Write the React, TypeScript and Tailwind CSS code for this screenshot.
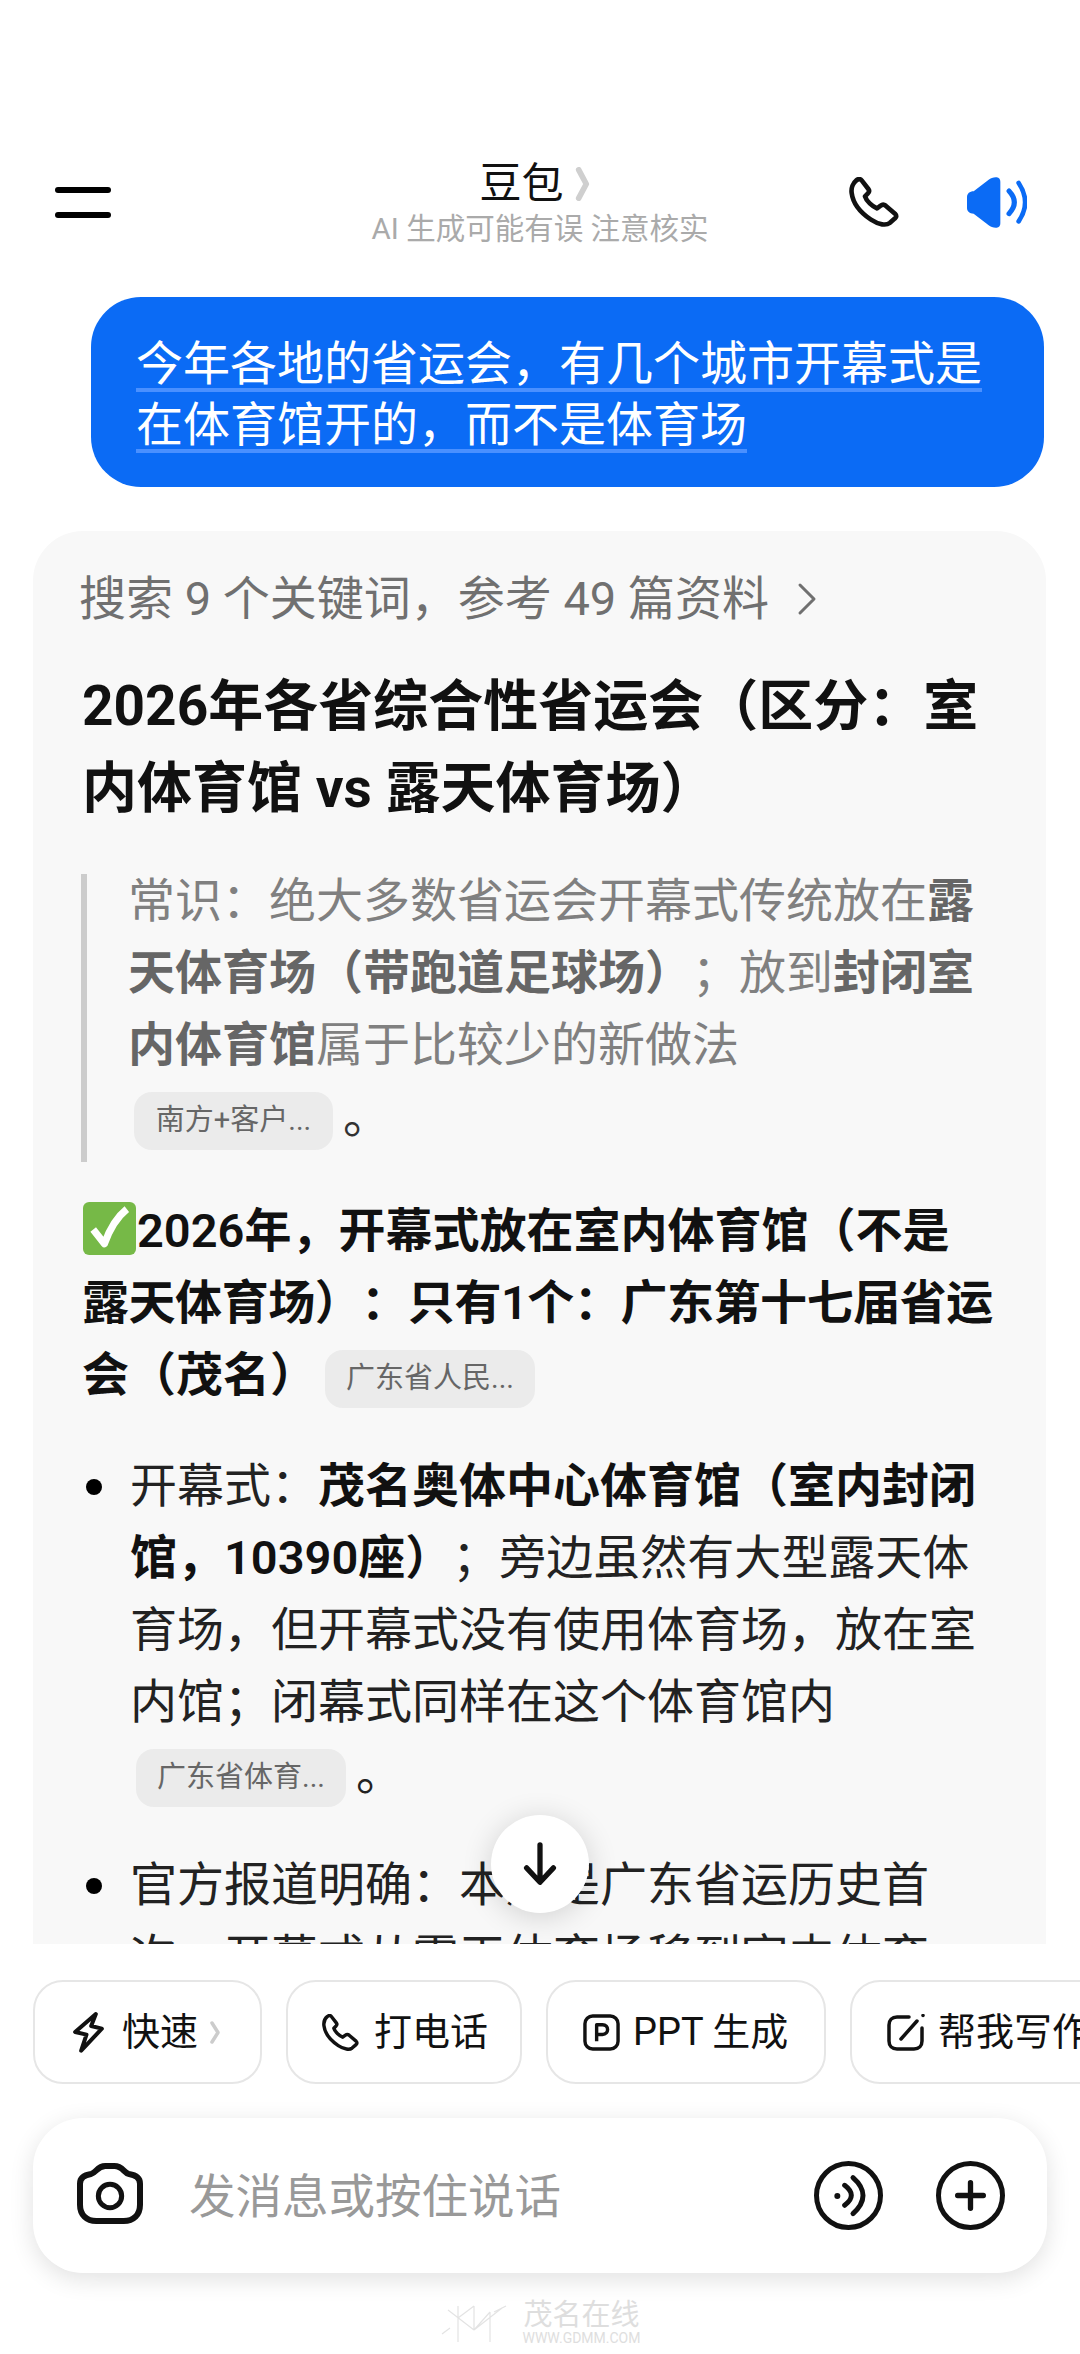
import { ReactNode } from "react";

const font = { fontFamily: '"Roboto", "Noto Sans CJK SC", sans-serif' };

const Pill = ({ label, className = "" }: { label: string; className?: string }) => (
  <span
    className={`inline-flex items-center justify-center h-[58px] rounded-[18px] bg-[#ebebeb] text-[29px] leading-none font-normal text-[#666666] align-middle ${className}`}
  >
    {label}
  </span>
);

const Chip = ({
  icon,
  label,
  className,
  extra,
}: {
  icon: ReactNode;
  label: string;
  className: string;
  extra?: ReactNode;
}) => (
  <div
    className={`flex flex-none items-center h-[104px] rounded-[30px] border-2 border-[#e6e6e6] bg-white text-[38px] text-[#111111] ${className}`}
  >
    {icon}
    <span className="whitespace-nowrap">{label}</span>
    {extra}
  </div>
);

const CheckEmoji = () => (
  <svg viewBox="0 0 52 52" className="inline-block w-[55px] h-[53px] align-[-8px]">
    <rect x="0" y="0" width="52" height="52" rx="6" fill="#76b947" />
    <path d="M10 27 L21 41 C26 27 33 15 43 7" fill="none" stroke="#ffffff" strokeWidth="7" strokeLinejoin="round" />
  </svg>
);

const phonePath =
  "M22 10 C28 5 34 5 38 10 L58 36 C62 41 60 46 56 50 L48 58 C52 72 70 88 84 94 L95 86 C100 82 105 82 110 86 L138 110 C143 115 143 120 138 124 L122 138 C112 146 90 144 66 128 C36 108 12 80 8 48 C6 34 12 18 22 10 Z";

const App = () => {
  return (
    <div className="relative flex flex-col w-[1080px] h-[2354px] overflow-hidden bg-white [text-spacing-trim:space-all]" style={font}>
      {/* header */}
      <header className="relative flex flex-none items-center justify-between h-[297px] pt-[108px] pb-[1px] pl-[55px] pr-[53px]">
        <div className="flex flex-col gap-[19px] w-[56px]">
          <div className="h-[6px] rounded-full bg-black" />
          <div className="h-[6px] rounded-full bg-black" />
        </div>
        <div className="absolute left-0 right-0 top-[159px] flex flex-col items-center">
          <div className="flex items-center text-[42px] leading-[50px] text-[#111111] -translate-x-[5px]">
            豆包
            <svg viewBox="0 0 14 36" className="ml-[10px] w-[17px] h-[34px]" fill="none" stroke="#cfcfcf" strokeWidth="6" strokeLinecap="round" strokeLinejoin="round">
              <path d="M3 3 L11 18 L3 33" />
            </svg>
          </div>
          <div className="mt-[2px] text-[29.5px] leading-[36px] text-[#aaaaaa]">AI 生成可能有误 注意核实</div>
        </div>
        <div className="flex items-center gap-[68px]">
          <svg viewBox="0 0 150 150" className="w-[50px] h-[50px]" fill="none" stroke="#111111" strokeWidth="14" strokeLinejoin="round">
            <path d={phonePath} />
          </svg>
          <svg viewBox="0 0 180 153" className="w-[60px] h-[51px]" fill="#0b6bf5">
            <path d="M0 60 C0 50 8 43 20 43 L65 8 C75 0 100 -6 100 14 V139 C100 159 75 153 65 145 L20 110 C8 110 0 103 0 93 Z" />
            <path d="M126 42 Q158 76 126 110" fill="none" stroke="#0b6bf5" strokeWidth="15" strokeLinecap="round" />
            <path d="M155 18 Q194 76 155 133" fill="none" stroke="#0b6bf5" strokeWidth="14" strokeLinecap="round" />
          </svg>
        </div>
      </header>

      {/* chat area */}
      <main className="flex-none h-[1647px] overflow-hidden">
        <div className="ml-[91px] mr-[36px] h-[190px] rounded-[50px] bg-[#0b6bf5] pt-[34px] pl-[45px] text-[47px] leading-[61px] text-white">
          <div className="w-fit pt-[2px] border-b-[4px] border-[#4a90ff] h-[61px]">今年各地的省运会，有几个城市开幕式是</div>
          <div className="w-fit pt-[2px] border-b-[4px] border-[#4a90ff] h-[61px]">在体育馆开的，而不是体育场</div>
        </div>

        <div className="mt-[44px] ml-[33px] mr-[34px] rounded-t-[50px] bg-[#f8f8f8] pt-[37px] pl-[49px] pr-[38px]">
          <div className="flex items-center gap-[28px] -ml-[3px] text-[47px] leading-[62px] text-[#707070]">
            搜索 9 个关键词，参考 49 篇资料
            <svg viewBox="0 0 20 34" className="w-[20px] h-[34px]" fill="none" stroke="#707070" strokeWidth="3" strokeLinecap="round" strokeLinejoin="round">
              <path d="M3 3 L17 17 L3 31" />
            </svg>
          </div>

          <h1 className="mt-[35px] text-[55px] leading-[82px] font-bold text-[#111111]">
            2026年各省综合性省运会（区分：室
            <br />
            内体育馆 vs 露天体育场）
          </h1>

          <blockquote className="mt-[45px] border-l-[6px] border-[#cccccc] pl-[41px] -ml-px h-[288px] text-[47px] leading-[72px] text-[#808080]">
            <div className="-translate-y-[9px]">
              常识：绝大多数省运会开幕式传统放在
              <b className="font-semibold text-[#666666]">露天体育场（带跑道足球场）</b>；放到
              <b className="font-semibold text-[#666666]">封闭室内体育馆</b>属于比较少的新做法
              <div>
                <Pill label="南方+客户..." className="ml-[6px] w-[199px]" />
                <span className="ml-[10px] text-[#333333]">。</span>
              </div>
            </div>
          </blockquote>

          <p className="mt-[33px] text-[47px] leading-[72px] font-semibold text-[#111111]">
            <CheckEmoji />
            2026年，开幕式放在室内体育馆（不是
            <br />
            <span className="tracking-[-0.45px]">露天体育场）：只有1个：广东第十七届省运</span>
            <br />
            会（茂名）
            <Pill label="广东省人民..." className="ml-[8px] w-[210px]" />
          </p>

          <ul className="mt-[39px] text-[47px] leading-[72px] text-[#222222]">
            <li className="relative pl-[48px]">
              <span className="absolute left-[4px] top-[29px] w-[16px] h-[16px] rounded-full bg-black" />
              开幕式：<b className="font-semibold text-[#111111]">茂名奥体中心体育馆（室内封闭馆，10390座）</b>；旁边虽然有大型露天体育场，但开幕式没有使用体育场，放在室内馆；闭幕式同样在这个体育馆内
              <div>
                <Pill label="广东省体育..." className="ml-[6px] w-[210px]" />
                <span className="ml-[10px]">。</span>
              </div>
            </li>
            <li className="relative mt-[39px] pl-[48px]">
              <span className="absolute left-[4px] top-[29px] w-[16px] h-[16px] rounded-full bg-black" />
              官方报道明确：本届是广东省运历史首次，开幕式从露天体育场移到室内体育
              <br />
              馆
            </li>
          </ul>
        </div>
      </main>

      {/* scroll to bottom */}
      <button className="absolute left-[491px] top-[1815px] flex items-center justify-center w-[98px] h-[98px] rounded-full bg-white shadow-[0_4px_30px_rgba(0,0,0,0.16)]">
        <svg viewBox="0 0 40 48" className="w-[40px] h-[46px]" fill="none" stroke="#111111" strokeWidth="5.5" strokeLinecap="round" strokeLinejoin="round">
          <path d="M20 4 V42 M6 28 L20 43 L34 28" />
        </svg>
      </button>

      {/* quick actions */}
      <div className="flex flex-none gap-[24px] mt-[36px] pl-[33px] overflow-hidden">
        <Chip
          className="w-[229px] pl-[38px] gap-[18px]"
          label="快速"
          icon={
            <svg viewBox="0 0 92 123" className="w-[31px] h-[41px]" fill="none" stroke="#111111" strokeWidth="12" strokeLinejoin="round">
              <path d="M68 6 L6 60 L40 68 L24 116 L86 50 L54 42 Z" />
            </svg>
          }
          extra={
            <svg viewBox="0 0 10 23" className="-ml-[6px] w-[10px] h-[23px]" fill="none" stroke="#cccccc" strokeWidth="3.5" strokeLinecap="round" strokeLinejoin="round">
              <path d="M2 2 L8 11.5 L2 21" />
            </svg>
          }
        />
        <Chip
          className="w-[236px] pl-[34px] gap-[15px]"
          label="打电话"
          icon={
            <svg viewBox="0 0 150 150" className="w-[37px] h-[37px]" fill="none" stroke="#111111" strokeWidth="14" strokeLinejoin="round">
              <path d={phonePath} />
            </svg>
          }
        />
        <Chip
          className="w-[280px] pl-[35px] gap-[13px]"
          label="PPT 生成"
          icon={
            <svg viewBox="0 0 38 38" className="w-[37px] h-[37px]" fill="none" stroke="#111111" strokeWidth="3.5" strokeLinejoin="round">
              <rect x="2" y="2" width="34" height="34" rx="8" />
              <path d="M14 28 V11 H20 C27 11 27 21 20 21 H14" />
            </svg>
          }
        />
        <Chip
          className="w-[300px] pl-[35px] gap-[13px]"
          label="帮我写作"
          icon={
            <svg viewBox="0 0 38 37" className="w-[38px] h-[37px]" fill="none" stroke="#111111" strokeWidth="3.5" strokeLinecap="round" strokeLinejoin="round">
              <path d="M22 3 H10 C5 3 2 6 2 11 V27 C2 32 5 35 10 35 H27 C32 35 35 32 35 27 V14" />
              <path d="M14 25 L30 7" />
              <path d="M36 1.5 V1.6" />
            </svg>
          }
        />
      </div>

      {/* input */}
      <div className="flex flex-none items-center h-[155px] mt-[34px] mx-[33px] pl-[44px] pr-[42px] rounded-[50px] bg-white shadow-[0_6px_24px_rgba(0,0,0,0.12)]">
        <svg viewBox="0 0 198 183" className="w-[66px] h-[61px] -mt-[4px]" fill="none" stroke="#111111" strokeWidth="18" strokeLinejoin="round">
          <path d="M9 62 C9 45 22 36 42 33 C58 30 60 9 85 9 H112 C138 9 140 30 156 33 C176 36 189 45 189 62 V125 C189 155 170 174 140 174 H58 C28 174 9 155 9 125 Z" />
          <circle cx="99" cy="99" r="35" strokeWidth="15" />
        </svg>
        <span className="ml-[46px] mt-[4px] text-[46.5px] text-[#999999]">发消息或按住说话</span>
        <div className="ml-auto flex items-center gap-[53px]">
          <svg viewBox="0 0 207 207" className="w-[69px] h-[69px]" fill="none" stroke="#111111" strokeWidth="15" strokeLinecap="round">
            <circle cx="103.5" cy="103.5" r="96" />
            <circle cx="70" cy="105" r="9" fill="#111111" stroke="none" />
            <path d="M92 73 Q132 103 92 133" />
            <path d="M117 50 Q177 103 117 158" />
          </svg>
          <svg viewBox="0 0 207 207" className="w-[69px] h-[69px]" fill="none" stroke="#111111" strokeWidth="15" strokeLinecap="round">
            <circle cx="103.5" cy="103.5" r="96" />
            <path d="M103.5 65 V142 M65 103.5 H142" strokeWidth="16" />
          </svg>
        </div>
      </div>

      {/* watermark */}
      <div className="flex flex-none items-center justify-center gap-[15px] mt-[28px] text-[#dedede]">
        <svg viewBox="0 0 68 38" className="w-[68px] h-[38px]" fill="none" stroke="#e3e3e3" strokeWidth="1.2">
          <path d="M2 30 L10 24 M8 6 L34 26 M18 2 V38 M34 26 L50 8 M18 14 L34 2 M34 2 V26 M50 8 V38 M34 26 L62 4 M54 8 L66 2" />
        </svg>
        <div className="flex flex-col items-center leading-none">
          <span className="text-[29px]">茂名在线</span>
          <span className="mt-[1px] text-[14px]">WWW.GDMM.COM</span>
        </div>
      </div>
    </div>
  );
};

export default App;
